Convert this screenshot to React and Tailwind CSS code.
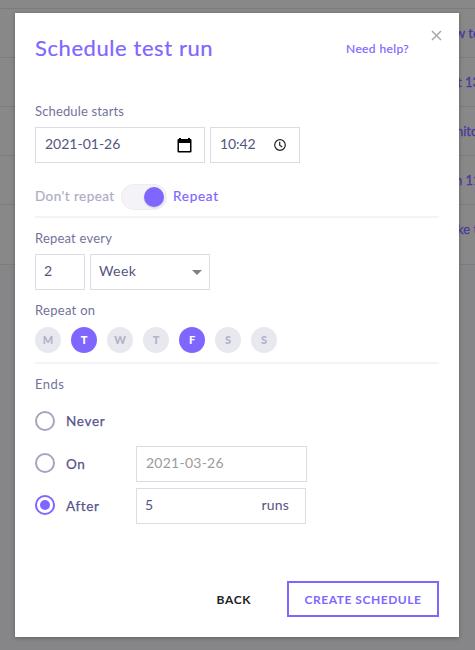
const rows = [
  { text: 'w te', h: 'h-[49px]', pad: 'pl-[455px]' },
  { text: 't 13', h: 'h-[49px]', pad: 'pl-[457px]' },
  { text: 'nito', h: 'h-[49px]', pad: 'pl-[456px]' },
  { text: 'n 11', h: 'h-[49px]', pad: 'pl-[455px]' },
  { text: 'ke t', h: 'h-[60px]', pad: 'pl-[457px]' },
];

const days = [
  ['M', false],
  ['T', true],
  ['W', false],
  ['T', false],
  ['F', true],
  ['S', false],
  ['S', false],
];

function Label({ children, className }) {
  return <div className={`h-5 text-[13px] leading-[18px] text-[#73739a] ${className}`}>{children}</div>;
}

function Box({ children, className }) {
  return (
    <div className={`flex h-9 items-center border border-[#dcdce6] bg-white text-[14px] text-[#55557f] ${className}`}>
      {children}
    </div>
  );
}

function Radio({ checked, className }) {
  return (
    <span
      className={`flex size-5 shrink-0 items-center justify-center rounded-full border-2 ${className} ${checked ? 'border-[#7f66ff]' : 'border-[#a5a5c0]'}`}
    >
      {checked && <span className="size-2.5 rounded-full bg-[#7f66ff]" />}
    </span>
  );
}

export default function App() {
  return (
    <div className="relative h-[650px] w-[475px] overflow-hidden bg-[#868688] font-['Lato',sans-serif]">
      <div className="h-[265px] border-b border-[#7d7d7f] bg-[#888888] pt-2">
        {rows.map((r) => (
          <div
            key={r.text}
            className={`${r.h} ${r.pad} overflow-hidden border-t border-[#7c7c7c] pt-[14px] text-[13px] leading-5 whitespace-nowrap text-[#4a3a9c] [-webkit-text-stroke:0.3px_currentColor]`}
          >
            {r.text}
          </div>
        ))}
      </div>

      <div className="absolute top-[13px] left-[15px] flex h-[624px] w-[444px] flex-col bg-white px-5 shadow-[0_1px_4px_rgba(0,0,0,0.28)]">
        <div className="flex h-[72px] shrink-0 items-center">
          <h1 className="-mt-0.5 w-[311px] text-[22px] leading-7 font-normal tracking-[0.58px] whitespace-nowrap text-[#7f66ff] [-webkit-text-stroke:0.2px_#7f66ff]">
            Schedule test run
          </h1>
          <span className="text-[12px] tracking-[0.4px] whitespace-nowrap text-[#7f66ff] [-webkit-text-stroke:0.2px_#7f66ff]">
            Need help?
          </span>
          <svg className="-mt-7 -mr-[3px] ml-auto size-[11px] shrink-0" viewBox="0 0 11 11" fill="none" stroke="#a8a8a8" strokeWidth="1.5">
            <path d="M1 1l9 9M10 1l-9 9" />
          </svg>
        </div>

        <Label className="mt-[17px] tracking-[0.15px]">Schedule starts</Label>
        <div className="mt-[5px] flex gap-[5px]">
          <Box className="w-[170px] justify-between pr-3 pl-[9px]">
            <span className="-mt-[3px]">2021-01-26</span>
            <svg className="mt-px h-[15px] w-[15px]" viewBox="0 0 15 15" fill="#000">
              <path fillRule="evenodd" d="M2 0h2v1h7V0h2v1h.5q1 0 1 1v11.500q0 1-1 1h-12q-1 0-1-1V2q0-1 1-1H2zM2 5v8h11V5z" />
            </svg>
          </Box>
          <Box className="w-[90px] justify-between pr-[13px] pl-[9px]">
            <span className="-mt-[3px] tracking-[-0.1px]">10:42</span>
            <svg className="size-3" viewBox="0 0 12 12" fill="none" stroke="#222" strokeWidth="1.2">
              <circle cx="6" cy="6" r="5.300" />
              <path d="M5.700 2.800V6.200L8.200 7.900" />
            </svg>
          </Box>
        </div>

        <div className="mt-[21px] flex h-[26px] items-center text-[13.500px] whitespace-nowrap [-webkit-text-stroke:0.2px_currentColor]">
          <span className="-mt-0.5 w-[86px] tracking-[0.45px] text-[#adadc5]">Don't repeat</span>
          <span className="flex h-[26px] w-[46px] items-center justify-end rounded-full border border-[#ececf2] bg-[#f3f3f8] pr-[2px]">
            <span className="size-5 rounded-full bg-[#7f66ff] shadow-[0_1px_2px_rgba(0,0,0,0.15)]" />
          </span>
          <span className="-mt-0.5 ml-1.5 tracking-[0.75px] text-[#7f66ff]">Repeat</span>
        </div>
        <div className="mt-1.5 h-[2px] shrink-0 bg-[#f4f4f4]" />

        <Label className="mt-[11px] tracking-[0.2px]">Repeat every</Label>
        <div className="mt-[5px] flex gap-[5px]">
          <Box className="w-[50px] pl-2">
            <span className="-mt-[3px]">2</span>
          </Box>
          <Box className="w-[120px] justify-between pr-[7px] pl-2">
            <span className="-mt-[3px] tracking-[0.4px]">Week</span>
            <svg className="h-[5px] w-2.5" viewBox="0 0 10 5" fill="#808080">
              <path d="M0 0h10L5 5z" />
            </svg>
          </Box>
        </div>

        <Label className="mt-[11px] tracking-[0.3px]">Repeat on</Label>
        <div className="mt-1.5 flex gap-2.5">
          {days.map(([d, on], i) => (
            <span
              key={i}
              className={`flex size-[26px] items-center justify-center rounded-full text-[11px] font-black ${on ? 'bg-[#7f66ff] text-white' : 'bg-[#e8e8ef] text-[#b2b2c8]'}`}
            >
              {d}
            </span>
          ))}
        </div>
        <div className="mt-[9px] h-[2px] shrink-0 bg-[#f4f4f4]" />

        <Label className="mt-[11px] tracking-[0.5px]">Ends</Label>
        <div className="mt-2 flex flex-col text-[13.500px] text-[#55558a]">
          <div className="flex h-9 items-center">
            <Radio />
            <span className="ml-[11px] w-[70px] tracking-[0.7px] [-webkit-text-stroke:0.25px_currentColor]">Never</span>
          </div>
          <div className="mt-[7px] flex h-9 items-center">
            <Radio className="-mt-0.5" />
            <span className="ml-[11px] w-[70px] tracking-[0.7px] [-webkit-text-stroke:0.25px_currentColor]">On</span>
            <Box className="w-[171px] pl-[9px]">
              <span className="-mt-[3px] tracking-[0.25px] text-[#9b9b9b]">2021-03-26</span>
            </Box>
          </div>
          <div className="mt-1.5 flex h-9 items-center">
            <Radio checked className="-mt-0.5" />
            <span className="ml-[11px] w-[70px] tracking-[0.6px] [-webkit-text-stroke:0.25px_currentColor]">After</span>
            <Box className="w-[170px] justify-between pr-4 pl-2">
              <span className="-mt-[3px]">5</span>
              <span className="-mt-[3px] tracking-[0.2px]">runs</span>
            </Box>
          </div>
        </div>

        <div className="mt-[57px] flex h-9 items-center justify-end text-[12px] font-bold whitespace-nowrap">
          <span className="mt-0.5 mr-9 tracking-[0.6px] text-[#222]">BACK</span>
          <span className="flex h-9 w-[152px] items-center justify-center border-2 border-[#7f66ff] pt-0.5 tracking-[0.55px] text-[#7f66ff]">
            CREATE SCHEDULE
          </span>
        </div>
      </div>
    </div>
  );
}
